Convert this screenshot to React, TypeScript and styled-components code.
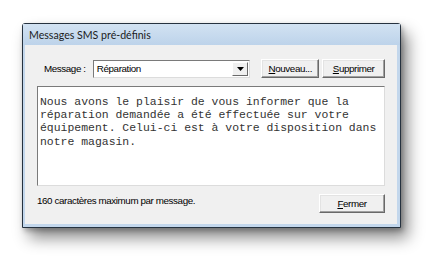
import React from "react";
import styled, { createGlobalStyle } from "styled-components";

const Global = createGlobalStyle`
  html, body { margin: 0; padding: 0; background: #ffffff; }
  body { width: 444px; height: 271px; overflow: hidden; }
`;

const Page = styled.div`
  padding: 23px 0 0 22px;
`;

const Window = styled.div`
  width: 379px;
  height: 205px;
  box-sizing: border-box;
  border: 1px solid #26323f;
  border-radius: 3px 3px 0 0;
  background: #c3d7ec;
  display: flex;
  flex-direction: column;
  box-shadow: 7px 10px 16px rgba(0, 0, 0, 0.45), 2px 3px 5px rgba(0, 0, 0, 0.25);
`;

const TitleBar = styled.div`
  height: 21px;
  flex: none;
  display: flex;
  align-items: center;
  padding-left: 6px;
  background: linear-gradient(#d2e2f2, #bdd3ea);
  font-family: Lato, "Open Sans", sans-serif;
  font-size: 10.6px;
  color: #1b1b1b;
`;

const Body = styled.div`
  flex: 1;
  margin: 0 3px 3px 2px;
  background: #f0f0f0;
  padding: 14px 12px 0 12px;
  display: flex;
  flex-direction: column;
  gap: 8px;
  font-family: "Liberation Sans", Arial, sans-serif;
  font-size: 9.8px;
  letter-spacing: -0.4px;
  color: #000;
`;

const Row = styled.div`
  display: flex;
  align-items: center;
  height: 19px;
`;

const Label = styled.span`
  margin-left: 7px;
  width: 49px;
`;

const Combo = styled.div`
  width: 158px;
  height: 18px;
  box-sizing: border-box;
  background: #fff;
  border: 1px solid;
  border-color: #7a7a7a #dcdcdc #dcdcdc #7a7a7a;
  display: flex;
  align-items: center;
  padding: 1px;
`;

const ComboText = styled.span`
  flex: 1;
  padding-left: 2px;
`;

const DropButton = styled.div`
  width: 16px;
  height: 14px;
  box-sizing: border-box;
  background: #f0f0f0;
  border: 1px solid;
  border-color: #ffffff #6a6a6a #6a6a6a #ffffff;
  display: flex;
  align-items: center;
  justify-content: center;
`;

const Button = styled.button<{ $w: number; $ml: number }>`
  width: ${(p) => p.$w}px;
  height: 19px;
  margin-left: ${(p) => p.$ml}px;
  padding: 0;
  box-sizing: border-box;
  background: #f0f0f0;
  border: 1px solid;
  border-color: #ffffff #696969 #696969 #ffffff;
  box-shadow: inset -1px -1px 0 #a0a0a0, inset 1px 1px 0 #e3e3e3;
  font-family: "Liberation Sans", Arial, sans-serif;
  font-size: 9.8px;
  letter-spacing: -0.4px;
  color: #000;
  u { text-decoration: underline; }
`;

const TextBox = styled.div`
  height: 100px;
  box-sizing: border-box;
  background: #fff;
  border: 1px solid;
  border-color: #7a7a7a #dcdcdc #dcdcdc #7a7a7a;
  padding: 8px 2px 0 2px;
  font-family: "Liberation Mono", "Courier New", monospace;
  font-size: 11.45px;
  letter-spacing: 0;
  line-height: 13.2px;
  color: #333;
  white-space: pre;
`;

const Footer = styled.div`
  display: flex;
  align-items: center;
  justify-content: space-between;
  height: 19px;
`;

const Note = styled.span`
  margin-top: -7px;
`;

export default function App() {
  return (
    <>
      <Global />
      <Page>
        <Window>
          <TitleBar>Messages SMS pré-définis</TitleBar>
          <Body>
            <Row>
              <Label>Message :</Label>
              <Combo>
                <ComboText>Réparation</ComboText>
                <DropButton>
                  <svg width="7" height="4" viewBox="0 0 7 4">
                    <path d="M0 0h7L3.5 4z" fill="#000" />
                  </svg>
                </DropButton>
              </Combo>
              <Button $w={58} $ml={11}>
                <u>N</u>ouveau...
              </Button>
              <Button $w={63} $ml={3}>
                <u>S</u>upprimer
              </Button>
            </Row>
            <TextBox>
              {"Nous avons le plaisir de vous informer que la\nréparation demandée a été effectuée sur votre\néquipement. Celui-ci est à votre disposition dans\nnotre magasin."}
            </TextBox>
            <Footer>
              <Note>160 caractères maximum par message.</Note>
              <Button $w={66} $ml={0}>
                <u>F</u>ermer
              </Button>
            </Footer>
          </Body>
        </Window>
      </Page>
    </>
  );
}
